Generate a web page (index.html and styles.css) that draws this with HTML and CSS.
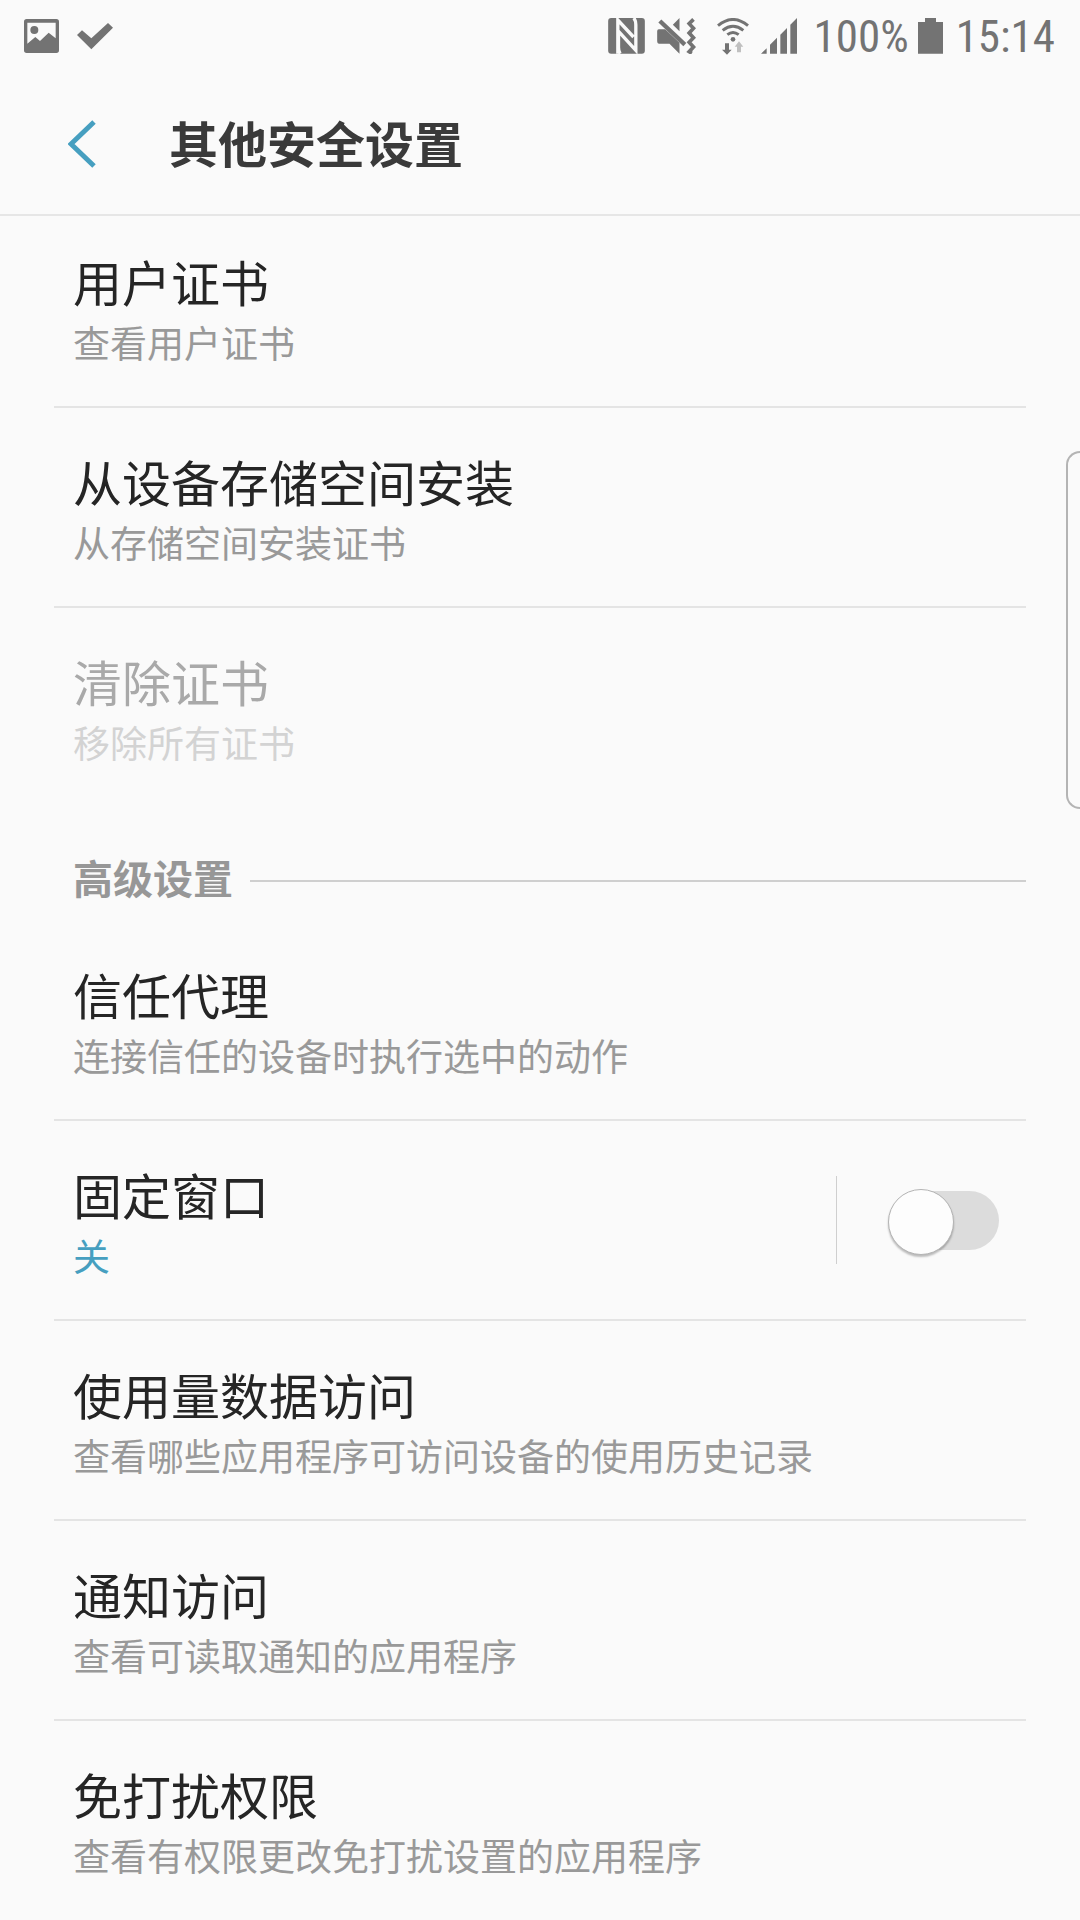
FILE: index.html
```html
<!DOCTYPE html>
<html lang="zh-CN">
<head>
    <meta charset="UTF-8">
    <meta name="viewport" content="width=device-width, initial-scale=1.0">
    <title>其他安全设置</title>
    <link rel="stylesheet" href="styles.css">
</head>
<body>
    <!-- Status bar -->
    <div class="status-bar">
        <div class="status-left">
            <svg width="35" height="34" viewBox="0 0 105 102" aria-hidden="true">
                <path fill-rule="evenodd" d="M8 0H97Q105 0 105 8V94Q105 102 97 102H8Q0 102 0 94V8Q0 0 8 0ZM10 11V74L34 54L48 66L74 41L95 58V11Z"/>
                <circle cx="31" cy="33" r="12"/>
            </svg>
            <svg width="36" height="28" viewBox="0 0 108 84" aria-hidden="true">
                <path d="M0 39L15 25L43 49L93 3L108 17L43 82Z"/>
            </svg>
        </div>
        <div class="status-right">
            <div class="status-icons">
                <svg width="37" height="36" viewBox="0 0 110 108" aria-hidden="true">
                    <rect width="110" height="107" rx="9"/>
                    <path class="cut" d="M29 107V6L76 57M36 107Q31 100 31 88V40L83 97V20Q83 8 77 0"/>
                </svg>
                <svg class="mute" width="39" height="36" viewBox="0 0 116 108" aria-hidden="true">
                    <path d="M67 0V40L47 20ZM5 34H24L67 74V107L37 77H5Q0 77 0 70V40Q0 34 5 34Z"/>
                    <path class="line" stroke-width="13" d="M8 9L83 80"/>
                    <path class="line" stroke-width="11" d="M109 4L96 17L109 31L96 45L109 59L96 73L109 87L96 101L104 106"/>
                </svg>
                <svg width="32" height="37" viewBox="0 0 96 111" aria-hidden="true">
                    <path class="line" stroke-width="9" d="M3 23Q48 -14 93 23M17 37Q48 13 79 37M31 50Q48 37 65 50"/>
                    <circle cx="48" cy="64" r="7"/>
                    <path d="M24 76H36V95H44L30 110L15 95H24Z"/>
                    <path class="faded" d="M60 103H72V86H79L66 70L53 86H60Z"/>
                </svg>
                <svg width="36" height="36" viewBox="0 0 108 108" aria-hidden="true">
                    <path d="M0 107L17 91V107ZM27 80L48 59V107H27ZM58 50L78 30V107H58ZM88 20L108 0V107H88Z"/>
                </svg>
            </div>
            <span class="battery-text">100%</span>
            <svg width="25" height="36" viewBox="0 0 75 108" aria-hidden="true">
                <path d="M21 0H54V12H75V107H0V12H21Z"/>
            </svg>
            <span class="clock">15:14</span>
        </div>
    </div>

    <!-- Header -->
    <header class="header">
        <a class="back" href="#" aria-label="返回">
            <svg width="28" height="48" viewBox="0 0 28 48" aria-hidden="true">
                <path d="M26 2L3 24L26 46"/>
            </svg>
        </a>
        <h1>其他安全设置</h1>
    </header>

    <!-- Settings list -->
    <main>
        <ul class="list">
            <li><a class="item" href="#"><span class="title">用户证书</span><span class="summary">查看用户证书</span></a></li>
            <li><a class="item" href="#"><span class="title">从设备存储空间安装</span><span class="summary">从存储空间安装证书</span></a></li>
            <li><a class="item disabled" href="#" aria-disabled="true"><span class="title">清除证书</span><span class="summary">移除所有证书</span></a></li>
        </ul>

        <h2 class="section">高级设置</h2>

        <ul class="list">
            <li><a class="item" href="#"><span class="title">信任代理</span><span class="summary">连接信任的设备时执行选中的动作</span></a></li>
            <li class="with-switch">
                <a class="item" href="#"><span class="title" id="pin-title">固定窗口</span><span class="summary state">关</span></a>
                <div class="switch-box">
                    <input class="switch" type="checkbox" role="switch" aria-labelledby="pin-title">
                </div>
            </li>
            <li><a class="item" href="#"><span class="title">使用量数据访问</span><span class="summary">查看哪些应用程序可访问设备的使用历史记录</span></a></li>
            <li><a class="item" href="#"><span class="title">通知访问</span><span class="summary">查看可读取通知的应用程序</span></a></li>
            <li><a class="item" href="#"><span class="title">免打扰权限</span><span class="summary">查看有权限更改免打扰设置的应用程序</span></a></li>
        </ul>
    </main>

    <!-- Edge panel handle -->
    <div class="edge-handle"></div>
</body>
</html>
```
FILE: styles.css
```css
* {
    box-sizing: border-box;
}

/* General Styles */
body {
    font-family: Roboto, "Noto Sans CJK SC", sans-serif;
    margin: 0;
    background-color: #fafafa;
    color: #252525;
    overflow-x: hidden;
}

a {
    color: inherit;
    text-decoration: none;
}

/* Status bar */
.status-bar {
    display: flex;
    justify-content: space-between;
    align-items: center;
    height: 72px;
    padding: 0 25px 0 24px;
    color: #737373;
    fill: #737373;
}

.status-left,
.status-right,
.status-icons {
    display: flex;
    align-items: center;
}

.status-left {
    gap: 18px;
}

.status-right {
    gap: 9px;
    font-family: "Roboto Condensed", "Liberation Sans Narrow", Roboto, sans-serif;
    font-size: 45px;
    line-height: 70px;
}

.status-icons {
    gap: 12px;
    margin-right: 8px;
}

.battery-text,
.clock {
    padding-top: 2px;
}

.clock {
    margin-left: 4px;
}

.mute {
    margin-right: 9px;
}

.line {
    fill: none;
    stroke: #737373;
}

.cut {
    fill: none;
    stroke: #fafafa;
    stroke-width: 10;
}

.faded {
    fill: #c0c0c0;
}

/* Header */
.header {
    display: flex;
    align-items: center;
    height: 144px;
    padding: 2px 0 0 68px;
    border-bottom: 2px solid #e6e6e6;
}

.back {
    display: flex;
    width: 101px;
}

.back path {
    fill: none;
    stroke: #469fc0;
    stroke-width: 5;
}

h1 {
    margin: 0;
    padding-top: 6px;
    font-size: 49px;
    line-height: 72px;
    color: #3a3a3a;
}

/* Settings list */
.list {
    list-style: none;
    margin: 0 54px;
    padding: 0;
}

.list li {
    border-bottom: 2px solid #e4e4e4;
}

.list li:last-child {
    border-bottom: none;
}

.item {
    display: block;
    padding: 47px 19px 31px;
}

.list:first-child li:first-child .item {
    padding-top: 39px;
}

.title,
.summary {
    display: block;
}

.title {
    font-size: 49px;
    line-height: 62px;
}

.summary {
    font-size: 37px;
    line-height: 58px;
    color: #999;
}

.state {
    color: #469fc0;
}

.disabled .title {
    color: #a9a9a9;
}

.disabled .summary {
    color: #d3d3d3;
}

/* Section heading */
.section {
    display: flex;
    align-items: center;
    gap: 17px;
    margin: 0 54px;
    padding: 48px 0 13px 19px;
    font-size: 40px;
    line-height: 54px;
    color: #979797;
}

.section::after {
    content: "";
    flex: 1;
    height: 2px;
    background-color: #cfcfcf;
}

/* Switch */
.with-switch {
    display: flex;
    align-items: center;
}

.with-switch .item {
    flex: 1;
}

.switch-box {
    display: flex;
    align-items: center;
    height: 88px;
    padding: 0 27px 0 51px;
    border-left: 1px solid #cfcfcf;
}

.switch {
    appearance: none;
    position: relative;
    width: 111px;
    height: 59px;
    margin: 0;
    border-radius: 30px;
    background: linear-gradient(to right, transparent 30px, #dcdcdc 30px);
    cursor: pointer;
}

.switch::before {
    content: "";
    position: absolute;
    top: -2px;
    left: 0;
    width: 64px;
    height: 64px;
    border: 1px solid #b4b4b4;
    border-radius: 50%;
    background-color: #fdfdfd;
    box-shadow: 0 2px 2px rgba(0, 0, 0, 0.25);
}

.switch:checked::before {
    left: 47px;
}

/* Edge panel handle */
.edge-handle {
    position: fixed;
    top: 451px;
    right: -2px;
    width: 16px;
    height: 358px;
    border: 2px solid #b4b4b4;
    border-right: none;
    border-radius: 14px 0 0 14px;
}
```
